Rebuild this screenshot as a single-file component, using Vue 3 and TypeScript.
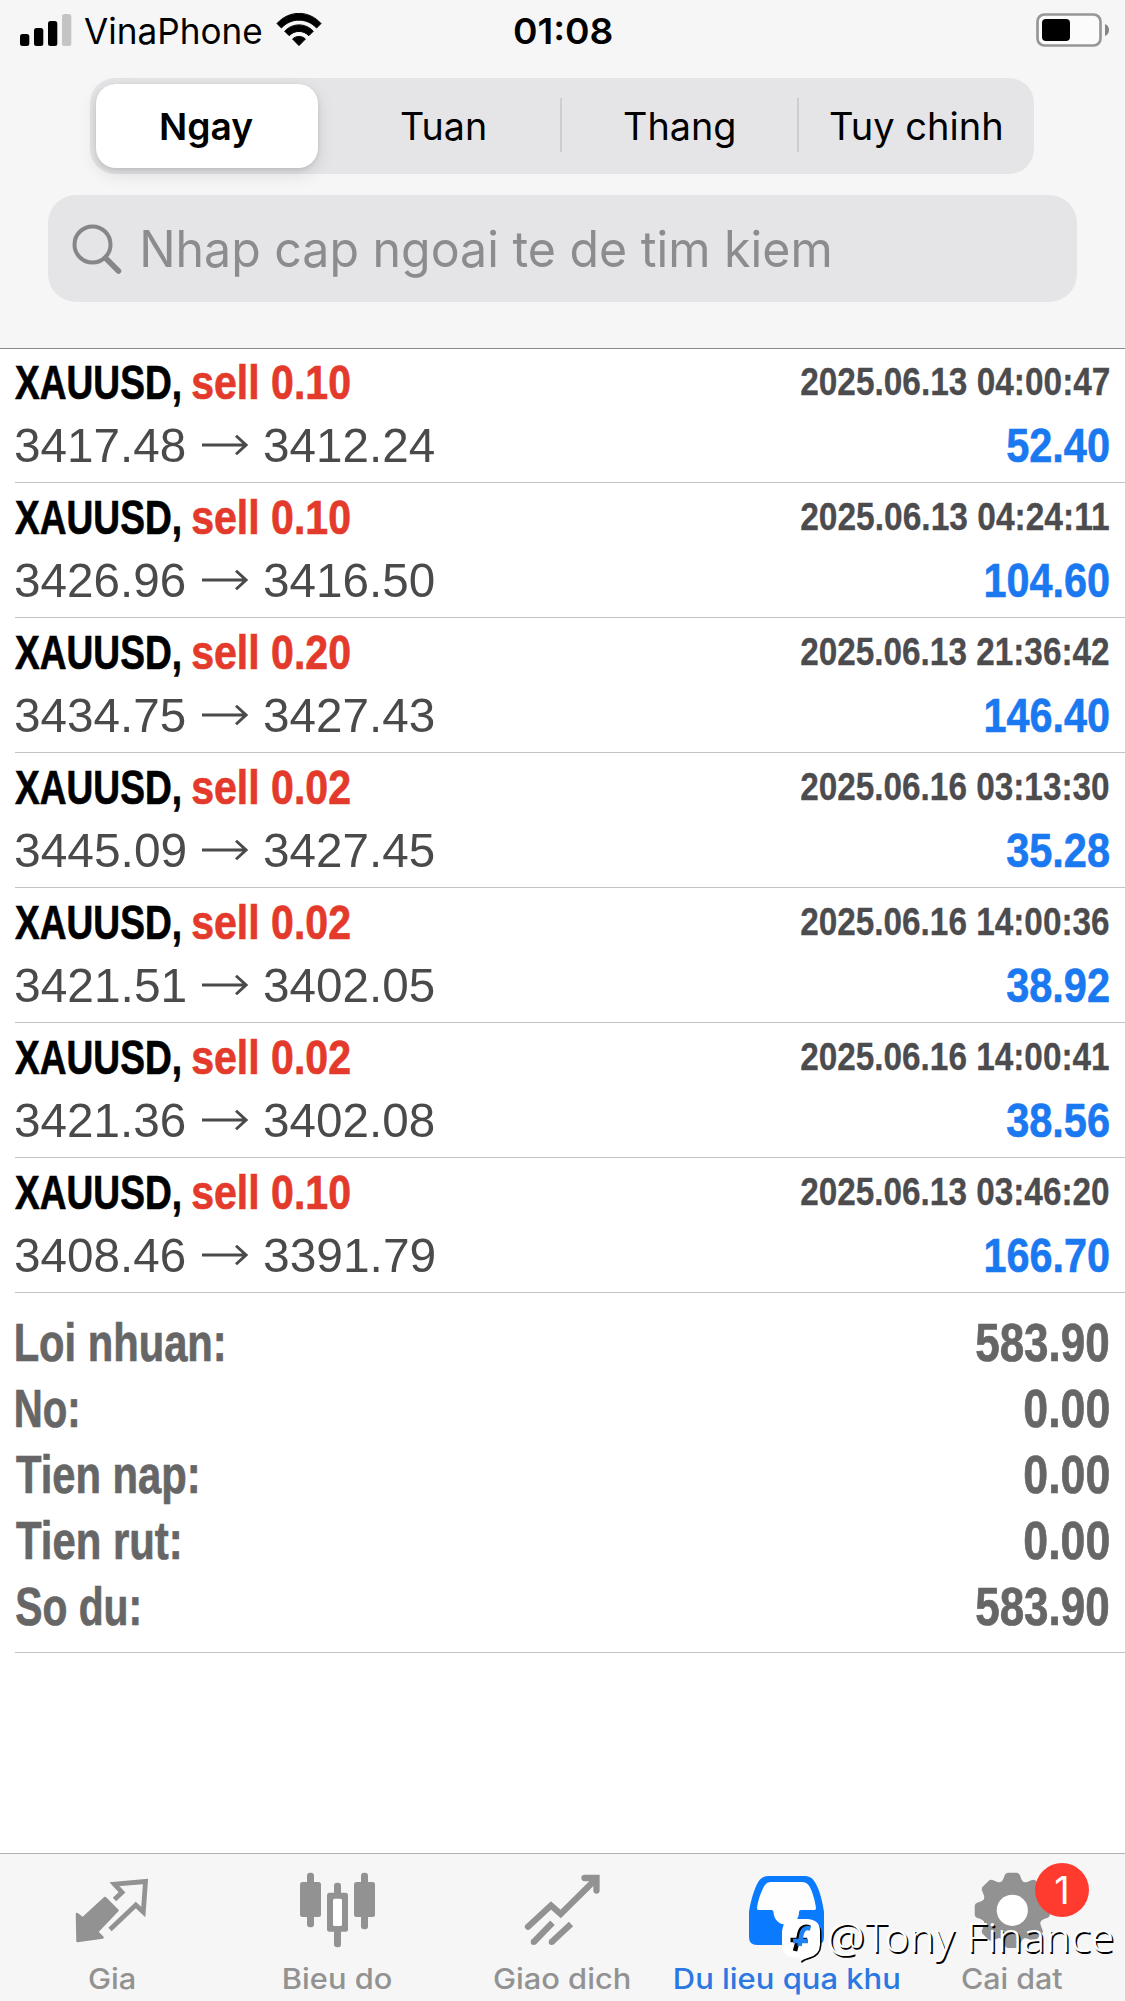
<script setup lang="ts">
interface Deal {
  side: string
  from: string
  to: string
  time: string
  profit: string
  profitWidth: number
}

const deals: Deal[] = [
  { side: 'sell 0.10', from: '3417.48', to: '3412.24', time: '2025.06.13 04:00:47', profit: '52.40', profitWidth: 102 },
  { side: 'sell 0.10', from: '3426.96', to: '3416.50', time: '2025.06.13 04:24:11', profit: '104.60', profitWidth: 123 },
  { side: 'sell 0.20', from: '3434.75', to: '3427.43', time: '2025.06.13 21:36:42', profit: '146.40', profitWidth: 123 },
  { side: 'sell 0.02', from: '3445.09', to: '3427.45', time: '2025.06.16 03:13:30', profit: '35.28', profitWidth: 102 },
  { side: 'sell 0.02', from: '3421.51', to: '3402.05', time: '2025.06.16 14:00:36', profit: '38.92', profitWidth: 102 },
  { side: 'sell 0.02', from: '3421.36', to: '3402.08', time: '2025.06.16 14:00:41', profit: '38.56', profitWidth: 102 },
  { side: 'sell 0.10', from: '3408.46', to: '3391.79', time: '2025.06.13 03:46:20', profit: '166.70', profitWidth: 123 },
]

const totals = [
  { label: 'Loi nhuan:', labelWidth: 207, value: '583.90', valueWidth: 132.5 },
  { label: 'No:', labelWidth: 61, value: '0.00', valueWidth: 84 },
  { label: 'Tien nap:', labelWidth: 181, value: '0.00', valueWidth: 84 },
  { label: 'Tien rut:', labelWidth: 163, value: '0.00', valueWidth: 84 },
  { label: 'So du:', labelWidth: 122.5, value: '583.90', valueWidth: 132.5 },
]

const periods = [
  { name: 'Ngay', width: 92 },
  { name: 'Tuan', width: 84 },
  { name: 'Thang', width: 110.5 },
  { name: 'Tuy chinh', width: 171.5 },
]

const toothAngles = [0, 45, 90, 135, 180, 225, 270, 315]

// Condenses a label horizontally so its glyphs span the given number of pixels.
const pen = document.createElement('canvas').getContext('2d')!
const vFit = {
  mounted(el: HTMLElement, binding: { value: number }) {
    const cs = getComputedStyle(el)
    pen.font = `${cs.fontWeight} ${cs.fontSize} ${cs.fontFamily}`
    const m = pen.measureText((el.textContent ?? '').trim())
    const scale = binding.value / (m.actualBoundingBoxLeft + m.actualBoundingBoxRight)
    el.style.width = `${binding.value}px`
    el.style.transform = `translateX(${m.actualBoundingBoxLeft * scale}px) scaleX(${scale})`
  },
}
</script>

<template>
  <div class="screen">
    <header class="header">
      <div class="status">
        <div class="carrier">
          <svg class="signal" width="52" height="33" viewBox="0 0 52 33">
            <rect x="0" y="21" width="9.3" height="12" rx="2.5" />
            <rect x="14" y="15" width="9.3" height="18" rx="2.5" />
            <rect x="28" y="8" width="9.3" height="25" rx="2.5" />
            <rect x="42" y="1" width="9.3" height="32" rx="2.5" fill="#c4c4c4" />
          </svg>
          <span v-fit="177" class="fit carrier-name">VinaPhone</span>
          <svg class="wifi" width="46" height="34" viewBox="0 0 46 34">
            <path d="M1 10.5 C13 -3 33 -3 45 10.5 L40.6 15 C31 4.5 15 4.5 5.4 15 Z" stroke="#000" stroke-width="1" stroke-linejoin="round" />
            <path d="M8.7 18.2 C16.5 9.8 29.5 9.8 37.3 18.2 L32.8 22.7 C27.5 17 18.5 17 13.2 22.7 Z" stroke="#000" stroke-width="1" stroke-linejoin="round" />
            <path d="M16.6 26 C20 22.6 26 22.6 29.4 26 L23 32.6 Z" stroke="#000" stroke-width="1" stroke-linejoin="round" />
          </svg>
        </div>
        <span v-fit="97.5" class="fit clock">01:08</span>
        <svg class="battery" width="74" height="34" viewBox="0 0 74 34">
          <rect x="1.5" y="1.5" width="63" height="31" rx="7" fill="#fbfbfb" stroke="#979797" stroke-width="2.7" />
          <rect x="6" y="6" width="28" height="22" rx="4" />
          <path d="M69 11 Q73 12.500 73 17 Q73 21.500 69 23 Z" fill="#858585" />
        </svg>
      </div>

      <div class="segments">
        <div v-for="(p, i) in periods" :key="p.name" class="segment" :class="{ on: i === 0, ruled: i > 1 }">
          <span v-fit="p.width" class="fit">{{ p.name }}</span>
        </div>
      </div>

      <div class="search">
        <svg width="52" height="52" viewBox="0 0 52 52" fill="none" stroke="#868688">
          <circle cx="21.500" cy="21.500" r="18" stroke-width="4" />
          <path d="M34.500 35 L47.500 48" stroke-width="5.500" stroke-linecap="round" />
        </svg>
        <span v-fit="686" class="fit">Nhap cap ngoai te de tim kiem</span>
      </div>
    </header>

    <main>
      <div v-for="(d, i) in deals" :key="i" class="deal">
        <div class="line top">
          <span class="title">
            <span v-fit="165" class="fit">XAUUSD,</span>
            <span v-fit="158" class="fit side">{{ d.side }}</span>
          </span>
          <span v-fit="308" class="fit time">{{ d.time }}</span>
        </div>
        <div class="line bottom">
          <span class="prices">
            <span v-fit="170" class="fit">{{ d.from }}</span>
            <svg width="46" height="20" viewBox="0 0 46 20" fill="none" stroke="#4a4a4d" stroke-width="2.900">
              <path d="M0 10 H44 M34 0.800 L44 10 L34 19.200" />
            </svg>
            <span v-fit="170" class="fit">{{ d.to }}</span>
          </span>
          <span v-fit="d.profitWidth" class="fit profit">{{ d.profit }}</span>
        </div>
      </div>

      <div class="totals">
        <div v-for="t in totals" :key="t.label" class="total">
          <span v-fit="t.labelWidth" class="fit">{{ t.label }}</span>
          <span v-fit="t.valueWidth" class="fit">{{ t.value }}</span>
        </div>
      </div>
    </main>

    <nav class="tabs">
      <div class="tab">
        <svg viewBox="0 1854 225 100">
          <path d="M77 1914 L82.700 1918.500 L105 1898 L117.500 1910.500 L97 1932 L102.500 1937.500 L77.500 1941 Z" fill="#929292" stroke="#929292" stroke-width="2.500" stroke-linejoin="round" />
          <path d="M114.500 1899.500 L122 1892.300 L114.500 1884.200 L145.500 1881.500 L143.300 1912 L135.800 1905 L110 1929.500" fill="none" stroke="#929292" stroke-width="4.800" />
        </svg>
        <span v-fit="46" class="fit">Gia</span>
      </div>
      <div class="tab">
        <svg viewBox="225 1854 225 100" fill="#929292">
          <rect x="307" y="1872.700" width="7" height="54.500" rx="3" />
          <rect x="300" y="1882" width="21" height="35" rx="2.500" />
          <rect x="334" y="1882.700" width="7" height="64.500" rx="3" />
          <rect x="327" y="1892.700" width="21" height="39" rx="2.500" />
          <rect x="333" y="1898.700" width="9" height="27.300" rx="1.500" fill="#fff" />
          <rect x="361" y="1872.700" width="7" height="56.500" rx="3" />
          <rect x="354" y="1882" width="21" height="35" rx="2.500" />
        </svg>
        <span v-fit="107" class="fit">Bieu do</span>
      </div>
      <div class="tab">
        <svg viewBox="450 1854 225 100" fill="none" stroke="#929292" stroke-width="6.300">
          <path d="M528 1926.700 L551 1905.500 L560.700 1914 L595 1880" stroke-linecap="round" stroke-linejoin="miter" />
          <path d="M584.500 1878 H596.500 V1890.500" stroke-linecap="round" />
          <path d="M588 1878 H597 V1888 Z" fill="#929292" stroke="none" />
          <path d="M552.500 1922.700 L533.700 1942 M571 1924 L551.700 1942" />
          <circle cx="533.700" cy="1942" r="3" fill="#929292" stroke="none" />
          <circle cx="551.700" cy="1942" r="3" fill="#929292" stroke="none" />
        </svg>
        <span v-fit="136" class="fit">Giao dich</span>
      </div>
      <div class="tab active">
        <svg viewBox="675 1854 225 100">
          <path d="M749 1912 C751 1898 756 1884 760 1879.500 Q763 1876 768 1876 H805 Q810 1876 813 1879.500 C818 1885 822 1898 824 1912 V1937 Q824 1945 816 1945 H757 Q749 1945 749 1937 Z" fill="#0a7aff" />
          <path d="M757 1908 C758 1900 762 1889 765 1885 Q767 1882 771 1882 H802 Q806 1882 808.500 1885 C812 1890 815 1900 816 1908 Q816 1910 814.500 1910 H801 Q799 1910 799 1912 C799 1929 774 1929 773.500 1912 Q773.500 1910 771.500 1910 H758.500 Q757 1910 757 1908 Z" fill="#fefefe" />
        </svg>
        <span v-fit="224.500" class="fit">Du lieu qua khu</span>
      </div>
      <div class="tab">
        <svg viewBox="900 1854 225 100" fill="#929292">
          <g transform="translate(1012.300 1910.300)">
            <circle r="30.500" />
            <path v-for="a in toothAngles" :key="a" :transform="`rotate(${a})`" d="M-12.500 -27 Q-9.500 -29 -8 -34 Q-7 -37.600 -4 -37.600 H4 Q7 -37.600 8 -34 Q9.500 -29 12.500 -27 Z" />
            <circle r="15.600" fill="#fff" />
          </g>
        </svg>
        <span v-fit="101" class="fit">Cai dat</span>
        <div class="badge">1</div>
      </div>
    </nav>

    <div class="watermark">
      <svg width="44" height="52" viewBox="0 0 44 52">
        <path d="M16 3 H28 Q40.500 5 40.500 15 V27 Q40 38 29 41 Q24 42 20.500 45 L19.500 40 Z" fill="#000" />
        <path d="M13 1 H27 Q39 2 39 13 V27 Q38.500 37 28 39.500 Q22 41 18.500 44 V39.500 H13 Q1 38 1 27 V13 Q2 2 13 1 Z" fill="#fff" />
        <path d="M29 9.500 C22 7 19 11 18 18 L14 33 M9.500 22 H26" fill="none" stroke="#000" stroke-width="4.500" />
        <path d="M29.500 10.500 C23 8.500 21 13 20 19 L18.500 28 M12 23 H27" fill="none" stroke="#1f83f5" stroke-width="4.500" />
      </svg>
      <span v-fit="283" class="fit">@Tony Finance</span>
    </div>
  </div>
</template>

<style>
body {
  margin: 0;
  background: #fff;
}
</style>

<style scoped>
.screen {
  position: relative;
  display: flex;
  flex-direction: column;
  width: 1125px;
  height: 2001px;
  overflow: hidden;
  background: #fff;
  color: #000;
  font-family: Inter, sans-serif;
}
.fit {
  display: block;
  flex: none;
  white-space: nowrap;
  transform-origin: 0 50%;
}
svg {
  display: block;
  flex: none;
}
.header {
  position: relative;
  z-index: 1;
  box-sizing: border-box;
  height: 348px;
  background: #f6f6f6;
  box-shadow: 0 1px 0 #8b8b8d;
}
.status {
  display: flex;
  align-items: flex-start;
  justify-content: space-between;
  height: 78px;
  padding: 0 15px 0 20px;
  box-sizing: border-box;
  font-size: 35.5px;
  line-height: 64px;
}
.carrier {
  display: flex;
  width: 493.5px;
}
.signal {
  margin: 13px 12px 0 0;
}
.wifi {
  margin: 13px 0 0 15px;
}
.clock {
  font-weight: 600;
}
.battery {
  margin: 13px 0 0 auto;
}
.segments {
  display: flex;
  width: 944px;
  height: 96px;
  margin: 0 0 0 90px;
  border-radius: 25px;
  background: #e5e5e7;
  font-size: 37.5px;
  line-height: 98px;
}
.segment {
  position: relative;
  display: flex;
  flex: 1;
  justify-content: center;
}
.segment.on {
  flex: none;
  width: 222px;
  height: 84px;
  margin: 6px 7px 6px 6px;
  border-radius: 20px;
  background: #fff;
  box-shadow: 0 6px 18px rgba(0, 0, 0, 0.11), 0 2px 5px rgba(0, 0, 0, 0.1);
  font-weight: 600;
  line-height: 86px;
}
.segment.ruled::before {
  content: '';
  position: absolute;
  left: -1px;
  top: 20px;
  width: 2px;
  height: 54px;
  background: #cecece;
}
.search {
  display: flex;
  width: 1029px;
  height: 107px;
  margin: 21px 0 0 48px;
  border-radius: 28px;
  background: #e5e5e7;
  color: #8c8c8e;
  font-size: 50px;
  line-height: 108px;
}
.search svg {
  margin: 28px 20px 0 22.5px;
}
.deal {
  box-sizing: border-box;
  height: 135px;
  margin-left: 15px;
  padding-right: 16.5px;
  border-bottom: 1px solid #c3c3c5;
  font-family: "Liberation Sans", sans-serif;
  font-size: 49px;
}
.line {
  display: flex;
  justify-content: space-between;
}
.top {
  height: 68px;
  font-weight: 700;
  line-height: 68px;
  -webkit-text-stroke: 0.7px currentColor;
}
.title {
  display: flex;
  gap: 12px;
}
.side {
  color: #e43a2b;
}
.time {
  color: #4c4c4f;
  font-size: 39px;
  line-height: 67px;
  -webkit-text-stroke: 0.3px currentColor;
}
.bottom {
  height: 58px;
  line-height: 58px;
  color: #4a4a4d;
}
.prices {
  display: flex;
  gap: 16.5px;
}
.prices svg {
  margin-top: 19px;
}
.profit {
  color: #1a78f0;
  font-weight: 700;
  -webkit-text-stroke: 0.6px currentColor;
}
.totals {
  margin-left: 15px;
  padding: 16px 16.5px 13px 1px;
  border-bottom: 1px solid #c3c3c5;
  color: #666;
  font: 700 53px "Liberation Sans", sans-serif;
  -webkit-text-stroke: 0.7px currentColor;
}
.total {
  display: flex;
  justify-content: space-between;
  height: 66px;
  line-height: 67px;
}
.tabs {
  display: flex;
  box-sizing: border-box;
  height: 148px;
  margin-top: auto;
  border-top: 1px solid #b2b2b2;
  background: #f6f6f6;
}
.tab {
  position: relative;
  display: flex;
  flex-direction: column;
  align-items: center;
  width: 225px;
  color: #929292;
  font-size: 28.5px;
  font-weight: 500;
  line-height: 50px;
}
.tab .fit {
  position: relative;
  left: -0.5px;
}
.tab svg {
  width: 225px;
  height: 100px;
}
.active {
  color: #2c78e2;
}
.badge {
  position: absolute;
  top: 9px;
  left: 135px;
  width: 54px;
  height: 54px;
  border-radius: 50%;
  background: #ff3b30;
  color: #fff;
  font-size: 38px;
  font-weight: 400;
  line-height: 54px;
  text-align: center;
}
.watermark {
  position: absolute;
  z-index: 2;
  left: 781px;
  top: 1918px;
  display: flex;
  gap: 4px;
  color: #fff;
  font: 300 40px/38px "Noto Sans", sans-serif;
  text-shadow: 1.5px 1.5px 0 #000;
}
</style>
